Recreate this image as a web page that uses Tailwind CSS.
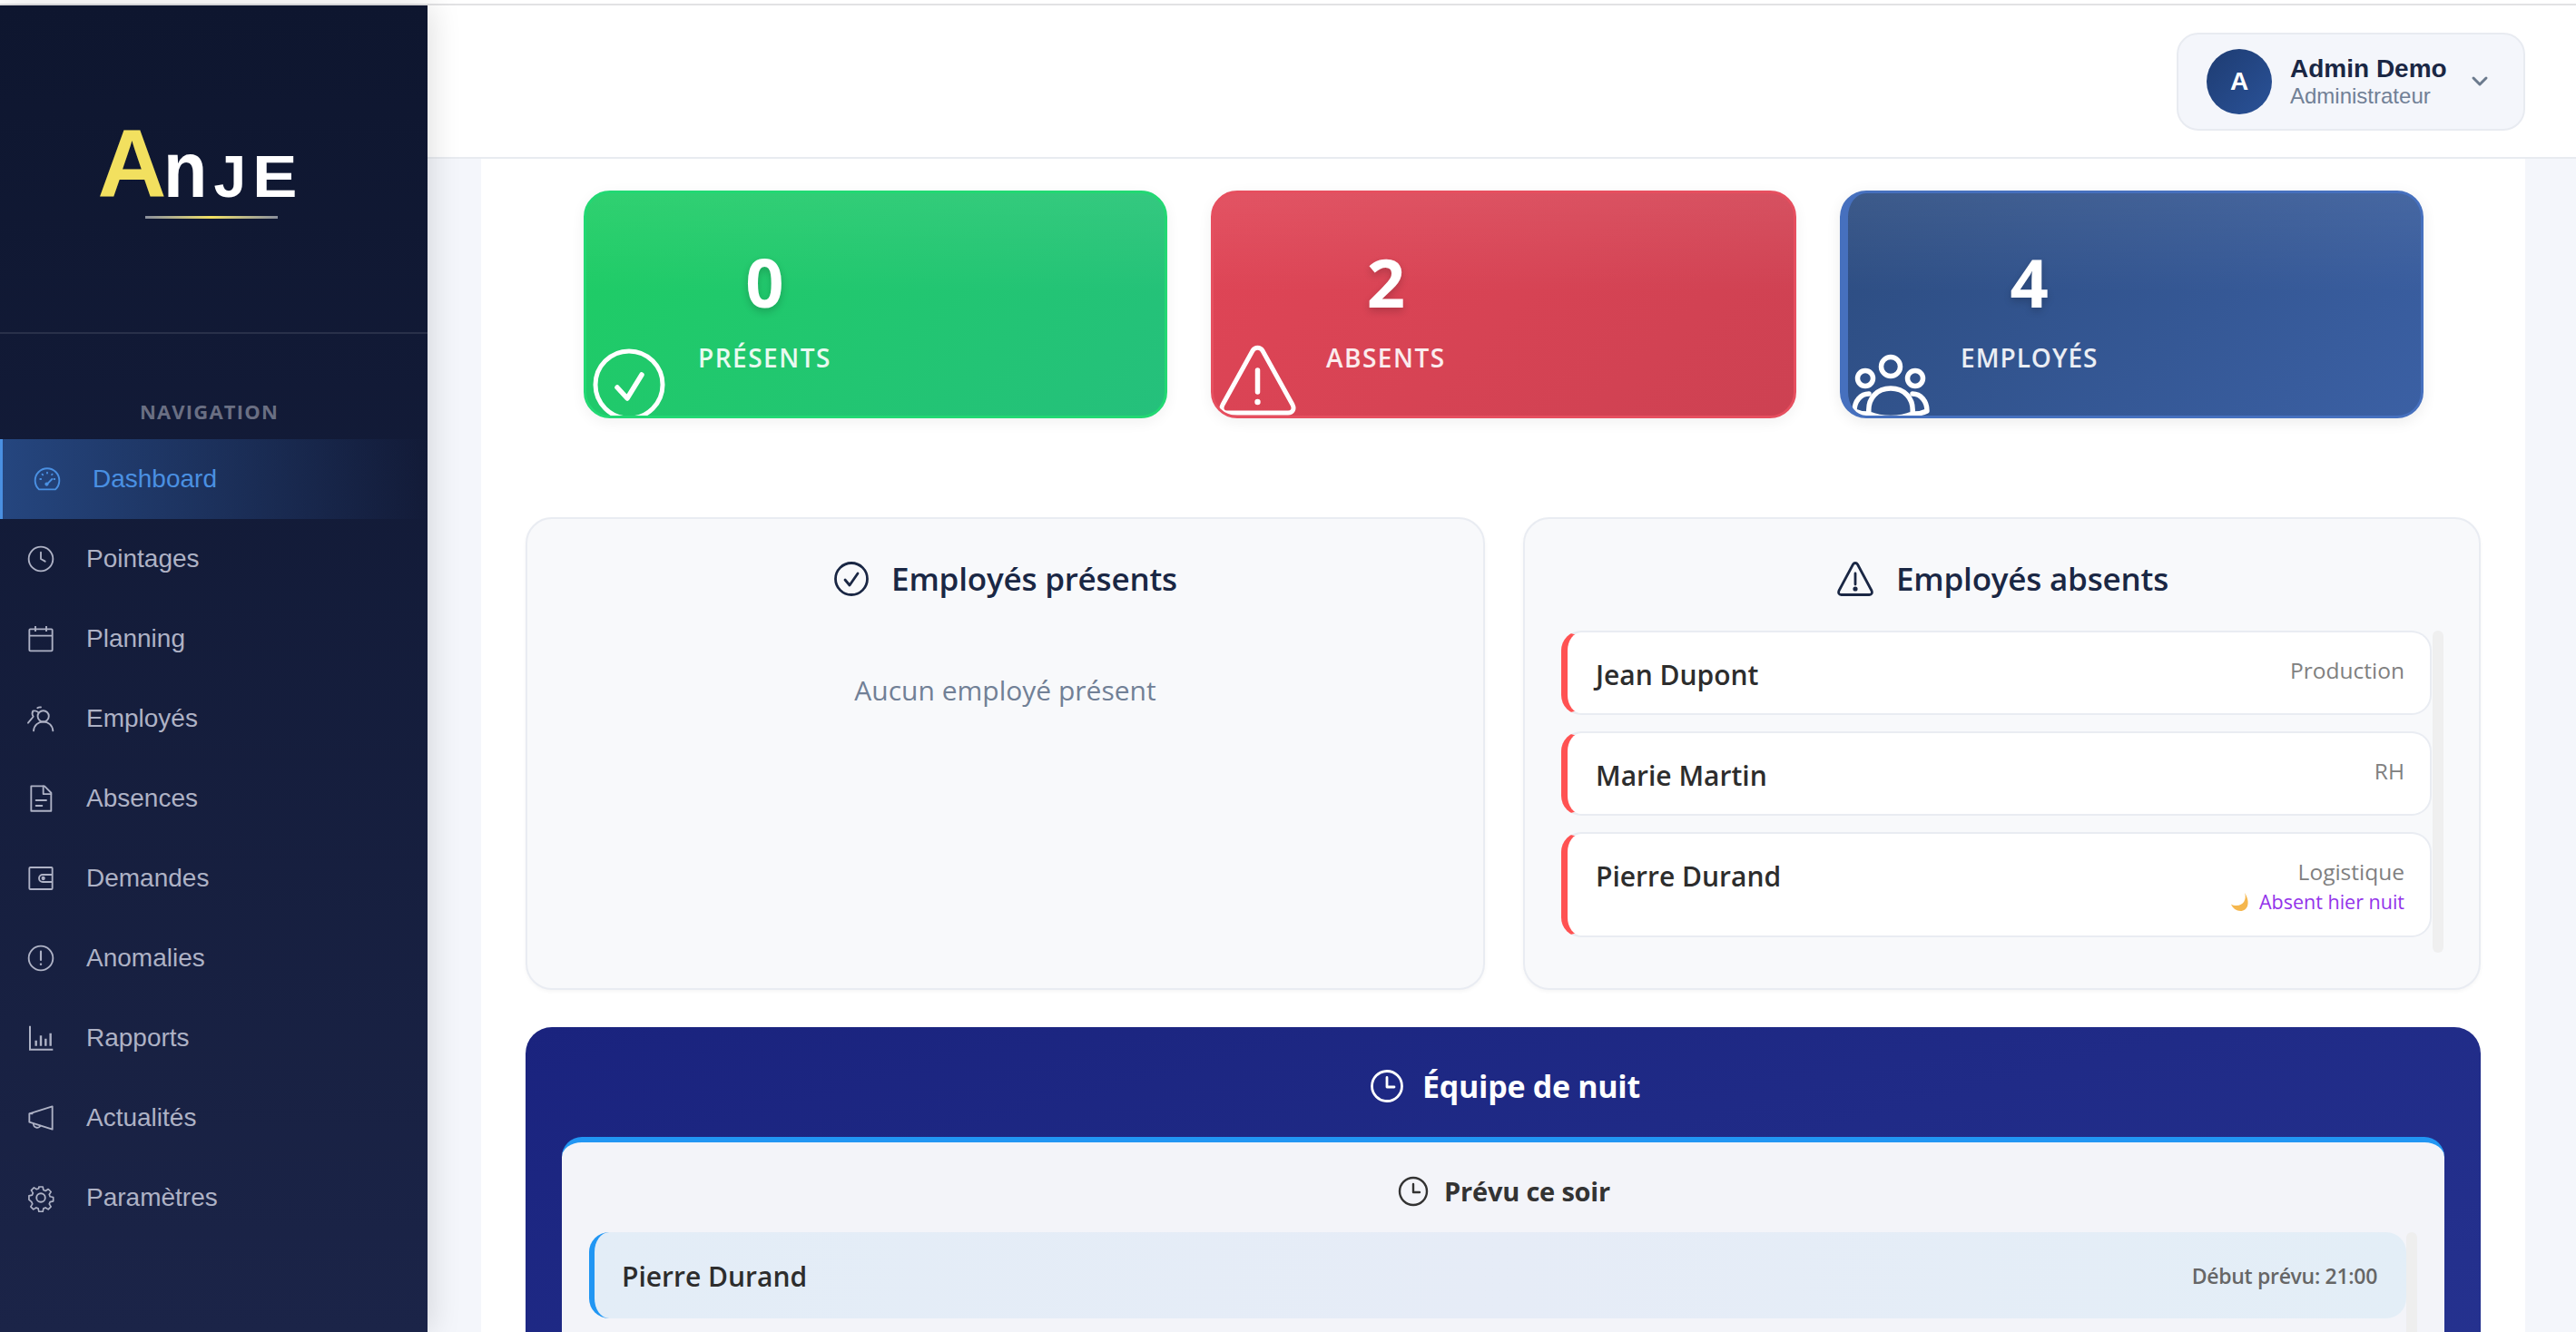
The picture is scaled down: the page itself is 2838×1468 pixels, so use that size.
<!DOCTYPE html>
<html lang="fr">
<head>
<meta charset="utf-8">
<title>Anje Dashboard</title>
<script src="https://cdn.jsdelivr.net/npm/@tailwindcss/browser@4"></script>
</head>
<body class="m-0 h-[1468px] w-[2838px] overflow-hidden bg-white font-['Open_Sans',sans-serif]">
<div class="h-[4px] bg-white"></div>
<div class="h-[2px] bg-[#e2e2e4]"></div>
<div class="flex h-[1462px]">
  <!-- Sidebar -->
  <aside class="relative z-10 flex w-[471px] shrink-0 flex-col bg-gradient-to-b from-[#0e162f] to-[#1b2448] shadow-[4px_0_32px_rgba(0,0,0,0.13)] font-['Liberation_Sans',sans-serif]">
    <div class="flex h-[362px] flex-col items-center border-b-2 border-white/10 pt-[125px]">
      <div class="mr-[32px] flex h-[100px] w-[224px] items-baseline font-bold leading-[100px]">
        <span class="w-[72px] text-[105px] text-[#f2e05f]">A</span>
        <span class="inline-block w-[56px] origin-left scale-x-[.9] text-[88px] text-white">n</span>
        <span class="w-[42px] text-[64px] text-white">J</span>
        <span class="inline-block origin-left scale-x-[1.16] text-[64px] text-white">E</span>
      </div>
      <div class="ml-[-6px] mt-[7px] h-[3px] w-[146px] bg-gradient-to-r from-[#8a8f9c] via-[#f2e05f] to-[#8a8f9c]"></div>
    </div>
    <div class="mt-[72px] h-[44px] pr-[10px] text-center font-['Open_Sans',sans-serif] text-[22px] font-bold leading-[26px] tracking-[1.2px] text-[#6a6f83]">NAVIGATION</div>
    <nav class="flex flex-col text-[28px] text-[#aeb2c5]">
      <a class="flex h-[88px] items-center border-l-[3px] border-[#4a90e2] bg-gradient-to-r from-[#25467f] to-transparent pl-[33px] text-[#4a90e2]">
        <svg class="h-[32px] w-[32px] shrink-0" viewBox="0 0 24 24" fill="none" stroke="currentColor" stroke-width="1.4" stroke-linecap="round" stroke-linejoin="round"><path d="M5.2 20.5A10 10 0 1 1 18.8 20.5Z"/><path d="M12 16l4-4"/><circle cx="11.6" cy="16.2" r=".9" fill="currentColor"/><path d="M12 6.5v.6M6.2 12h.7M17.6 12h.6M7.9 8l.5.5M16.200 8l-.4.4"/></svg>
        <span class="ml-[34px]">Dashboard</span>
      </a>
      <a class="flex h-[88px] items-center pl-[29px]">
        <svg class="h-[32px] w-[32px] shrink-0" viewBox="0 0 24 24" fill="none" stroke="currentColor" stroke-width="1.4" stroke-linecap="round" stroke-linejoin="round"><circle cx="12" cy="12" r="10"/><path d="M12 6.5V12l3.5 2"/></svg>
        <span class="ml-[34px]">Pointages</span>
      </a>
      <a class="flex h-[88px] items-center pl-[29px]">
        <svg class="h-[32px] w-[32px] shrink-0" viewBox="0 0 24 24" fill="none" stroke="currentColor" stroke-width="1.4" stroke-linejoin="round"><rect x="2.5" y="4" width="19" height="18" rx=".8"/><path d="M2.5 9.5h19M7.5 1.5v4.5M16.5 1.5v4.5"/></svg>
        <span class="ml-[34px]">Planning</span>
      </a>
      <a class="flex h-[88px] items-center pl-[29px]">
        <svg class="h-[32px] w-[32px] shrink-0" viewBox="0 0 24 24" fill="none" stroke="currentColor" stroke-width="1.4" stroke-linecap="round" stroke-linejoin="round"><circle cx="14" cy="10" r="4.6"/><path d="M6 22c.4-4.6 3.8-7.4 8-7.4s7.6 2.8 8 7.4"/><path d="M9.700 6.700A4.300 4.300 0 0 0 5.400 5.800M9.200 3.200A4 4 0 0 1 12 2.600M5.500 5.600a4.400 4.400 0 0 0 .3 4.700L1.500 15.500"/></svg>
        <span class="ml-[34px]">Employés</span>
      </a>
      <a class="flex h-[88px] items-center pl-[29px]">
        <svg class="h-[32px] w-[32px] shrink-0" viewBox="0 0 24 24" fill="none" stroke="currentColor" stroke-width="1.4" stroke-linejoin="round" stroke-linecap="round"><path d="M4 1.800h11l5.500 5.500v15H4Z"/><path d="M14 1.800v6.500h6.500M8 13.500h8.500M8 18h5"/></svg>
        <span class="ml-[34px]">Absences</span>
      </a>
      <a class="flex h-[88px] items-center pl-[29px]">
        <svg class="h-[32px] w-[32px] shrink-0" viewBox="0 0 24 24" fill="none" stroke="currentColor" stroke-width="1.4" stroke-linejoin="round"><rect x="2.5" y="3" width="19" height="18" rx=".8"/><path d="M21.500 9h-8a3 3 0 0 0 0 6h8"/><circle cx="14" cy="12" r=".9" fill="currentColor"/></svg>
        <span class="ml-[34px]">Demandes</span>
      </a>
      <a class="flex h-[88px] items-center pl-[29px]">
        <svg class="h-[32px] w-[32px] shrink-0" viewBox="0 0 24 24" fill="none" stroke="currentColor" stroke-width="1.4" stroke-linecap="round"><circle cx="12" cy="12" r="10"/><path d="M12 6.500v7" stroke-width="1.6"/><circle cx="12" cy="17" r=".9" fill="currentColor" stroke="none"/></svg>
        <span class="ml-[34px]">Anomalies</span>
      </a>
      <a class="flex h-[88px] items-center pl-[29px]">
        <svg class="h-[32px] w-[32px] shrink-0" viewBox="0 0 24 24" fill="none" stroke="currentColor" stroke-width="1.4"><path d="M3 2v19.500h19" stroke-width="1.5"/><path d="M8 14v4.500M12 10v8.500M16 12.500v6M20 8v10.500" stroke-width="1.8"/></svg>
        <span class="ml-[34px]">Rapports</span>
      </a>
      <a class="flex h-[88px] items-center pl-[29px]">
        <svg class="h-[32px] w-[32px] shrink-0" viewBox="0 0 24 24" fill="none" stroke="currentColor" stroke-width="1.4" stroke-linejoin="round"><path d="M21.500 2.500v19L2.500 15.500v-7Z"/><path d="M2.500 8.500h3M6 16.500a3 3 0 0 0 5.800 1.500"/></svg>
        <span class="ml-[34px]">Actualités</span>
      </a>
      <a class="flex h-[88px] items-center pl-[29px]">
        <svg class="h-[32px] w-[32px] shrink-0" viewBox="0 0 24 24" fill="none" stroke="currentColor" stroke-width="1.4" stroke-linejoin="round"><circle cx="12" cy="12" r="3.600"/><path d="M10.200 2h3.600l.6 2.900 1.900.8 2.500-1.600 2.500 2.500-1.600 2.500.8 1.900 2.900.6v3.600l-2.900.6-.8 1.900 1.600 2.500-2.500 2.500-2.500-1.600-1.900.8-.6 2.900h-3.600l-.6-2.900-1.900-.8-2.500 1.600-2.500-2.500 1.600-2.500-.8-1.900L1.100 13.800v-3.600l2.900-.6.8-1.900-1.600-2.500 2.500-2.500 2.500 1.600 1.900-.8Z" transform="translate(1.200 1.200) scale(.9)"/></svg>
        <span class="ml-[34px]">Paramètres</span>
      </a>
    </nav>
  </aside>
  <!-- Main -->
  <main class="flex min-w-0 flex-1 flex-col overflow-hidden bg-[#f4f6fb]">
    <header class="flex h-[169px] shrink-0 items-center justify-end border-b-2 border-[#e8ebf0] bg-white pr-[56px]">
      <div class="flex h-[108px] w-[384px] items-center rounded-[24px] border-2 border-[#e8ebf1] bg-[#f4f6fb] pl-[31px] font-['Liberation_Sans',sans-serif]">
        <div class="flex h-[72px] w-[72px] shrink-0 items-center justify-center rounded-full bg-gradient-to-br from-[#1e3c72] to-[#2a5298] text-[28px] font-bold text-white">A</div>
        <div class="ml-[20px] flex flex-col">
          <span class="mt-[-2px] text-[28px] font-bold leading-[34px] text-[#1a2744]">Admin Demo</span>
          <span class="text-[24px] leading-[26px] text-[#718096]">Administrateur</span>
        </div>
        <svg class="ml-[26px] h-[14px] w-[20px]" viewBox="0 0 20 14" fill="none" stroke="#6b7a8d" stroke-width="3" stroke-linecap="round" stroke-linejoin="round"><path d="M3 3l7 7 7-7"/></svg>
      </div>
    </header>
    <div class="ml-[59px] mr-[56px] flex-1 bg-white px-[49px] pt-[35px]">
      <!-- Stat cards -->
      <section class="grid grid-cols-[643px_645px_643px] gap-[48px] pl-[64px] pr-[63px]">
        <div class="relative h-[251px] overflow-hidden rounded-[29px] border-[3px] border-[#22d873] bg-[linear-gradient(180deg,rgba(255,255,255,0.08),rgba(255,255,255,0)_45%),linear-gradient(135deg,#1ecd64,#25c07c)] pl-[123px] pt-[62px] text-white shadow-[0_4px_16px_rgba(0,0,0,0.06)]">
          <div class="inline-flex flex-col items-center">
            <span class="text-[74px] font-bold leading-[72px] [text-shadow:0_4px_8px_rgba(0,0,0,0.18)]">0</span>
            <span class="mt-[29px] text-[28px] font-semibold leading-[36px] tracking-[1.5px] text-white/90">PRÉSENTS</span>
          </div>
          <svg class="absolute bottom-[-8px] left-[5px] h-[84px] w-[84px]" viewBox="0 0 84 84" fill="none" stroke="#fff" stroke-width="5" stroke-linecap="round" stroke-linejoin="round"><circle cx="42" cy="42" r="37"/><path d="M29 45l11 12 16-26" stroke-width="5.5"/></svg>
        </div>
        <div class="relative h-[251px] overflow-hidden rounded-[29px] border-[3px] border-[#e64f5f] bg-[linear-gradient(180deg,rgba(255,255,255,0.08),rgba(255,255,255,0)_45%),linear-gradient(135deg,#e04556,#cd4152)] pl-[124px] pt-[62px] text-white shadow-[0_4px_16px_rgba(0,0,0,0.06)]">
          <div class="inline-flex flex-col items-center">
            <span class="text-[74px] font-bold leading-[72px] [text-shadow:0_4px_8px_rgba(0,0,0,0.18)]">2</span>
            <span class="mt-[29px] text-[28px] font-semibold leading-[36px] tracking-[1.5px] text-white/90">ABSENTS</span>
          </div>
          <svg class="absolute bottom-[0px] left-[6px] h-[78px] w-[86px]" viewBox="0 0 86 78" fill="none" stroke="#fff" stroke-width="5" stroke-linecap="round" stroke-linejoin="round"><path d="M37 6.500c2.500-4.500 8.500-4.500 11 0L81 66c2.500 5 0 9-5 9H9c-5 0-7.500-4-5-9Z"/><path d="M42.500 28v24" stroke-width="5.5"/><circle cx="42.500" cy="63" r="3.200" fill="#fff" stroke="none"/></svg>
        </div>
        <div class="relative h-[251px] overflow-hidden rounded-[29px] border-[3px] border-l-[9px] border-[#4670be] bg-[linear-gradient(180deg,rgba(255,255,255,0.08),rgba(255,255,255,0)_45%),linear-gradient(135deg,#2c4c80,#3b60a4)] pl-[124px] pt-[62px] text-white shadow-[0_4px_16px_rgba(0,0,0,0.08)]">
          <div class="inline-flex flex-col items-center">
            <span class="text-[74px] font-bold leading-[72px] [text-shadow:0_4px_8px_rgba(0,0,0,0.18)]">4</span>
            <span class="mt-[29px] text-[28px] font-semibold leading-[36px] tracking-[1px] text-white/90">EMPLOYÉS</span>
          </div>
          <svg class="absolute bottom-[-4px] left-[3px] h-[72px] w-[88px]" viewBox="0 0 88 72" fill="none" stroke="#fff" stroke-width="5.5" stroke-linecap="round" stroke-linejoin="round"><circle cx="44" cy="14" r="10.500"/><circle cx="16" cy="27" r="8.500"/><circle cx="71" cy="27" r="8.500"/><path d="M20 66c-2-18 10-28 24-28s26 10 24 28c-14 6-34 6-48 0Z"/><path d="M20 44c-9 0-16 8-16 19 4 2 9 3 14 3M68 44c9 0 16 8 16 19-4 2-9 3-14 3"/></svg>
        </div>
      </section>
      <!-- Presence panels -->
      <section class="mt-[109px] grid grid-cols-[1057px_1055px] gap-[42px]">
        <div class="h-[521px] rounded-[29px] border-2 border-[#e9ecf2] bg-[#f8f9fb] pt-[32px] shadow-[0_2px_4px_rgba(0,0,0,0.04)]">
          <div class="flex h-[68px] items-center justify-center">
            <svg class="h-[40px] w-[40px]" viewBox="0 0 40 40" fill="none" stroke="#1a2744" stroke-width="2.800" stroke-linecap="round" stroke-linejoin="round"><circle cx="20" cy="20" r="17.500"/><path d="M13 21l5 6 9-13"/></svg>
            <h2 class="ml-[24px] text-[35px] font-semibold leading-[68px] tracking-[-0.2px] text-[#1a2744]">Employés présents</h2>
          </div>
          <p class="mt-[65px] text-center text-[30px] leading-[48px] text-[#718096]">Aucun employé présent</p>
        </div>
        <div class="h-[521px] rounded-[29px] border-2 border-[#e9ecf2] bg-[#f8f9fb] pl-[40px] pr-[39px] pt-[32px] shadow-[0_2px_4px_rgba(0,0,0,0.04)]">
          <div class="flex h-[68px] items-center justify-center">
            <svg class="h-[40px] w-[42px]" viewBox="0 0 42 40" fill="none" stroke="#1a2744" stroke-width="2.800" stroke-linecap="round" stroke-linejoin="round"><path d="M18.500 4c1.200-2 3.800-2 5 0l15.500 29c1 2.500 0 4.500-2.500 4.500h-31c-2.500 0-3.500-2-2.500-4.500Z"/><path d="M21 14v12"/><circle cx="21" cy="31" r="1.200" fill="#1a2744"/></svg>
            <h2 class="ml-[24px] text-[35px] font-semibold leading-[68px] tracking-[-0.2px] text-[#1a2744]">Employés absents</h2>
          </div>
          <div class="mt-[23px] flex h-[355px] gap-px">
            <ul class="flex flex-1 flex-col gap-[18px]">
              <li class="flex items-start justify-between rounded-[22px] border-2 border-l-[7px] border-[#e9ecf2] border-l-[#ff5252] bg-white pb-[22px] pl-[31px] pr-[28px] pt-[25px]">
                <span class="mt-[2px] text-[30px] font-semibold leading-[40px] text-[#2d2d2d]">Jean Dupont</span>
                <span class="text-[24.500px] leading-[34px] text-[#808080]">Production</span>
              </li>
              <li class="flex items-start justify-between rounded-[22px] border-2 border-l-[7px] border-[#e9ecf2] border-l-[#ff5252] bg-white pb-[22px] pl-[31px] pr-[28px] pt-[25px]">
                <span class="mt-[2px] text-[30px] font-semibold leading-[40px] text-[#2d2d2d]">Marie Martin</span>
                <span class="text-[24.500px] leading-[34px] text-[#808080]">RH</span>
              </li>
              <li class="flex items-start justify-between rounded-[22px] border-2 border-l-[7px] border-[#e9ecf2] border-l-[#ff5252] bg-white pb-[22px] pl-[31px] pr-[28px] pt-[25px]">
                <span class="mt-[2px] text-[30px] font-semibold leading-[40px] text-[#2d2d2d]">Pierre Durand</span>
                <div class="flex flex-col items-end">
                  <span class="text-[24.500px] leading-[34px] text-[#808080]">Logistique</span>
                  <span class="flex items-center text-[21.500px] font-medium leading-[31px] text-[#9333ea]">
                    <svg class="mr-[9px] h-[24px] w-[24px]" viewBox="0 0 24 22"><path d="M17 1c2.500 7-1.500 14-9 14-2.500 0-4.500-.5-6-1.500C3.500 18 8 21 12.500 21 20 21 24 12 17 1Z" fill="#f5b74e"/></svg>Absent hier nuit</span>
                </div>
              </li>
            </ul>
            <div class="w-[12px] rounded-[6px] bg-[#efefef]"></div>
          </div>
        </div>
      </section>
      <!-- Night team -->
      <section class="mt-[41px] rounded-t-[29px] bg-gradient-to-br from-[#1a237e] to-[#283593] px-[40px] pb-[40px] pt-[40px]">
        <div class="flex h-[50px] items-center justify-center pl-[4px] text-white">
          <svg class="h-[38px] w-[38px]" viewBox="0 0 38 38" fill="none" stroke="#fff" stroke-width="2.800" stroke-linecap="round" stroke-linejoin="round"><circle cx="19" cy="19" r="16.500"/><path d="M19 9.500V20h8"/></svg>
          <h2 class="ml-[20px] text-[34px] font-bold leading-[50px] tracking-[-0.3px]">Équipe de nuit</h2>
        </div>
        <div class="mt-[31px] rounded-t-[22px] border-t-[6px] border-[#2196f3] bg-[#f3f4f9] px-[30px] pt-[34px]">
          <div class="flex h-[40px] items-center justify-center pl-[2px] text-[#333]">
            <svg class="h-[34px] w-[34px]" viewBox="0 0 34 34" fill="none" stroke="#333" stroke-width="2.400" stroke-linecap="round" stroke-linejoin="round"><circle cx="17" cy="17" r="15"/><path d="M17 9v9h7"/></svg>
            <h3 class="ml-[17px] text-[29px] font-bold leading-[40px] tracking-[-0.2px]">Prévu ce soir</h3>
          </div>
          <div class="mt-[25px] flex h-[300px]">
            <div class="flex h-[95px] flex-1 items-center justify-between rounded-[22px] border-l-[6px] border-[#2196f3] bg-gradient-to-r from-[#e3edf7] via-[#e6ecf7] to-[#e3eef7] pl-[30px] pr-[32px]">
              <span class="mt-[3px] text-[30px] font-semibold leading-[40px] text-[#2d2d2d]">Pierre Durand</span>
              <span class="text-[23px] font-semibold leading-[34px] tracking-[-0.3px] text-[#666]">Début prévu: 21:00</span>
            </div>
            <div class="w-[12px] rounded-t-[6px] bg-[#eeeeee]"></div>
          </div>
        </div>
      </section>
    </div>
  </main>
</div>
</body>
</html>
